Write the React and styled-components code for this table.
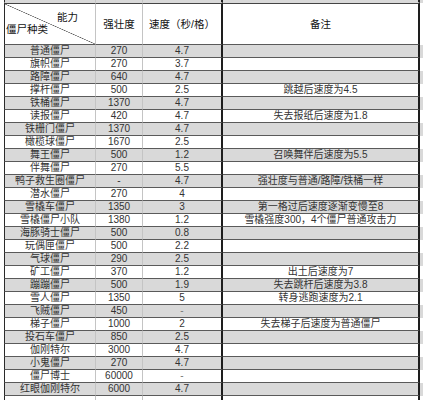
import React from 'react';
import styled, { createGlobalStyle } from 'styled-components';

const GlobalStyle = createGlobalStyle`
  body {
    margin: 0;
    background: #fff;
    font-family: "Liberation Sans", "Noto Sans CJK SC", sans-serif;
  }
`;

const COLS = '92px 47px 80px 197px';

const Sheet = styled.div`
  display: flex;
  flex-direction: column;
  padding-left: 4px;
  width: 423px;
  height: 400px;
  overflow: hidden;
  box-sizing: border-box;
`;

const Row = styled.div`
  display: grid;
  grid-template-columns: ${COLS};
  height: ${({ h }) => h || 13}px;
  background: ${({ shade }) => (shade ? '#d9d9d9' : '#fff')};
  flex-shrink: 0;
`;

const Cell = styled.div`
  box-sizing: border-box;
  display: flex;
  align-items: center;
  justify-content: center;
  font-size: 10px;
  line-height: 12px;
  color: ${({ dim }) => (dim ? '#777' : '#333')};
  white-space: nowrap;
  border-bottom: 1px solid ${({ top }) => (top ? 'transparent' : '#5a5a5a')};
  border-right: ${({ edge }) => (edge ? '2px solid #1e1e1e' : '1px solid #c4c4c4')};
  border-left: ${({ first }) => (first ? '1px solid #2a2a2a' : 'none')};
`;

const HeadCell = styled(Cell)`
  border-top: 1px solid #444;
  color: #111;
  font-size: 10.5px;
`;

const DiagCell = styled(HeadCell)`
  flex-direction: column;
  align-items: stretch;
  justify-content: flex-start;
  padding: 7px 0 0 1px;
  background: linear-gradient(
    to top right,
    transparent calc(50% - 0.6px),
    #555 50%,
    transparent calc(50% + 0.6px)
  );
`;

const Ability = styled.span`
  align-self: flex-end;
  margin-right: 17px;
  line-height: 12px;
`;

const Kind = styled.span`
  align-self: flex-start;
  margin-top: 0;
  line-height: 12px;
`;

const rows = [
  ['普通僵尸', '270', '4.7', ''],
  ['旗帜僵尸', '270', '3.7', ''],
  ['路障僵尸', '640', '4.7', ''],
  ['撑杆僵尸', '500', '2.5', '跳越后速度为4.5'],
  ['铁桶僵尸', '1370', '4.7', ''],
  ['读报僵尸', '420', '4.7', '失去报纸后速度为1.8'],
  ['铁栅门僵尸', '1370', '4.7', ''],
  ['橄榄球僵尸', '1670', '2.5', ''],
  ['舞王僵尸', '500', '1.2', '召唤舞伴后速度为5.5'],
  ['伴舞僵尸', '270', '5.5', ''],
  ['鸭子救生圈僵尸', '-', '4.7', '强壮度与普通/路障/铁桶一样'],
  ['潜水僵尸', '270', '4', ''],
  ['雪橇车僵尸', '1350', '3', '第一格过后速度逐渐变慢至8'],
  ['雪橇僵尸小队', '1380', '1.2', '雪橇强度300，4个僵尸普通攻击力'],
  ['海豚骑士僵尸', '500', '0.8', ''],
  ['玩偶匣僵尸', '500', '2.2', ''],
  ['气球僵尸', '290', '2.5', ''],
  ['矿工僵尸', '370', '1.2', '出土后速度为7'],
  ['蹦蹦僵尸', '500', '1.9', '失去跳杆后速度为3.8'],
  ['雪人僵尸', '1350', '5', '转身逃跑速度为2.1'],
  ['飞贼僵尸', '450', '-', ''],
  ['梯子僵尸', '1000', '2', '失去梯子后速度为普通僵尸'],
  ['投石车僵尸', '850', '2.5', ''],
  ['伽刚特尔', '3000', '4.7', ''],
  ['小鬼僵尸', '270', '4.7', ''],
  ['僵尸博士', '60000', '-', ''],
  ['红眼伽刚特尔', '6000', '4.7', ''],
];

export default function App() {
  return (
    <>
      <GlobalStyle />
      <Sheet>
        <Row h={3} shade>
          <Cell first top />
          <Cell top />
          <Cell edge top />
          <Cell edge top />
        </Row>
        <Row h={42}>
          <DiagCell first>
            <Ability>能力</Ability>
            <Kind>僵尸种类</Kind>
          </DiagCell>
          <HeadCell>强壮度</HeadCell>
          <HeadCell edge>速度（秒/格）</HeadCell>
          <HeadCell edge>备注</HeadCell>
        </Row>
        {rows.map(([name, hp, speed, note], i) => (
          <Row key={name} shade={i % 2 === 0}>
            <Cell first>{name}</Cell>
            <Cell>{hp}</Cell>
            <Cell edge dim={speed === '-'}>{speed}</Cell>
            <Cell edge>{note}</Cell>
          </Row>
        ))}
        <Row>
          <Cell first />
          <Cell />
          <Cell edge />
          <Cell edge />
        </Row>
      </Sheet>
    </>
  );
}
